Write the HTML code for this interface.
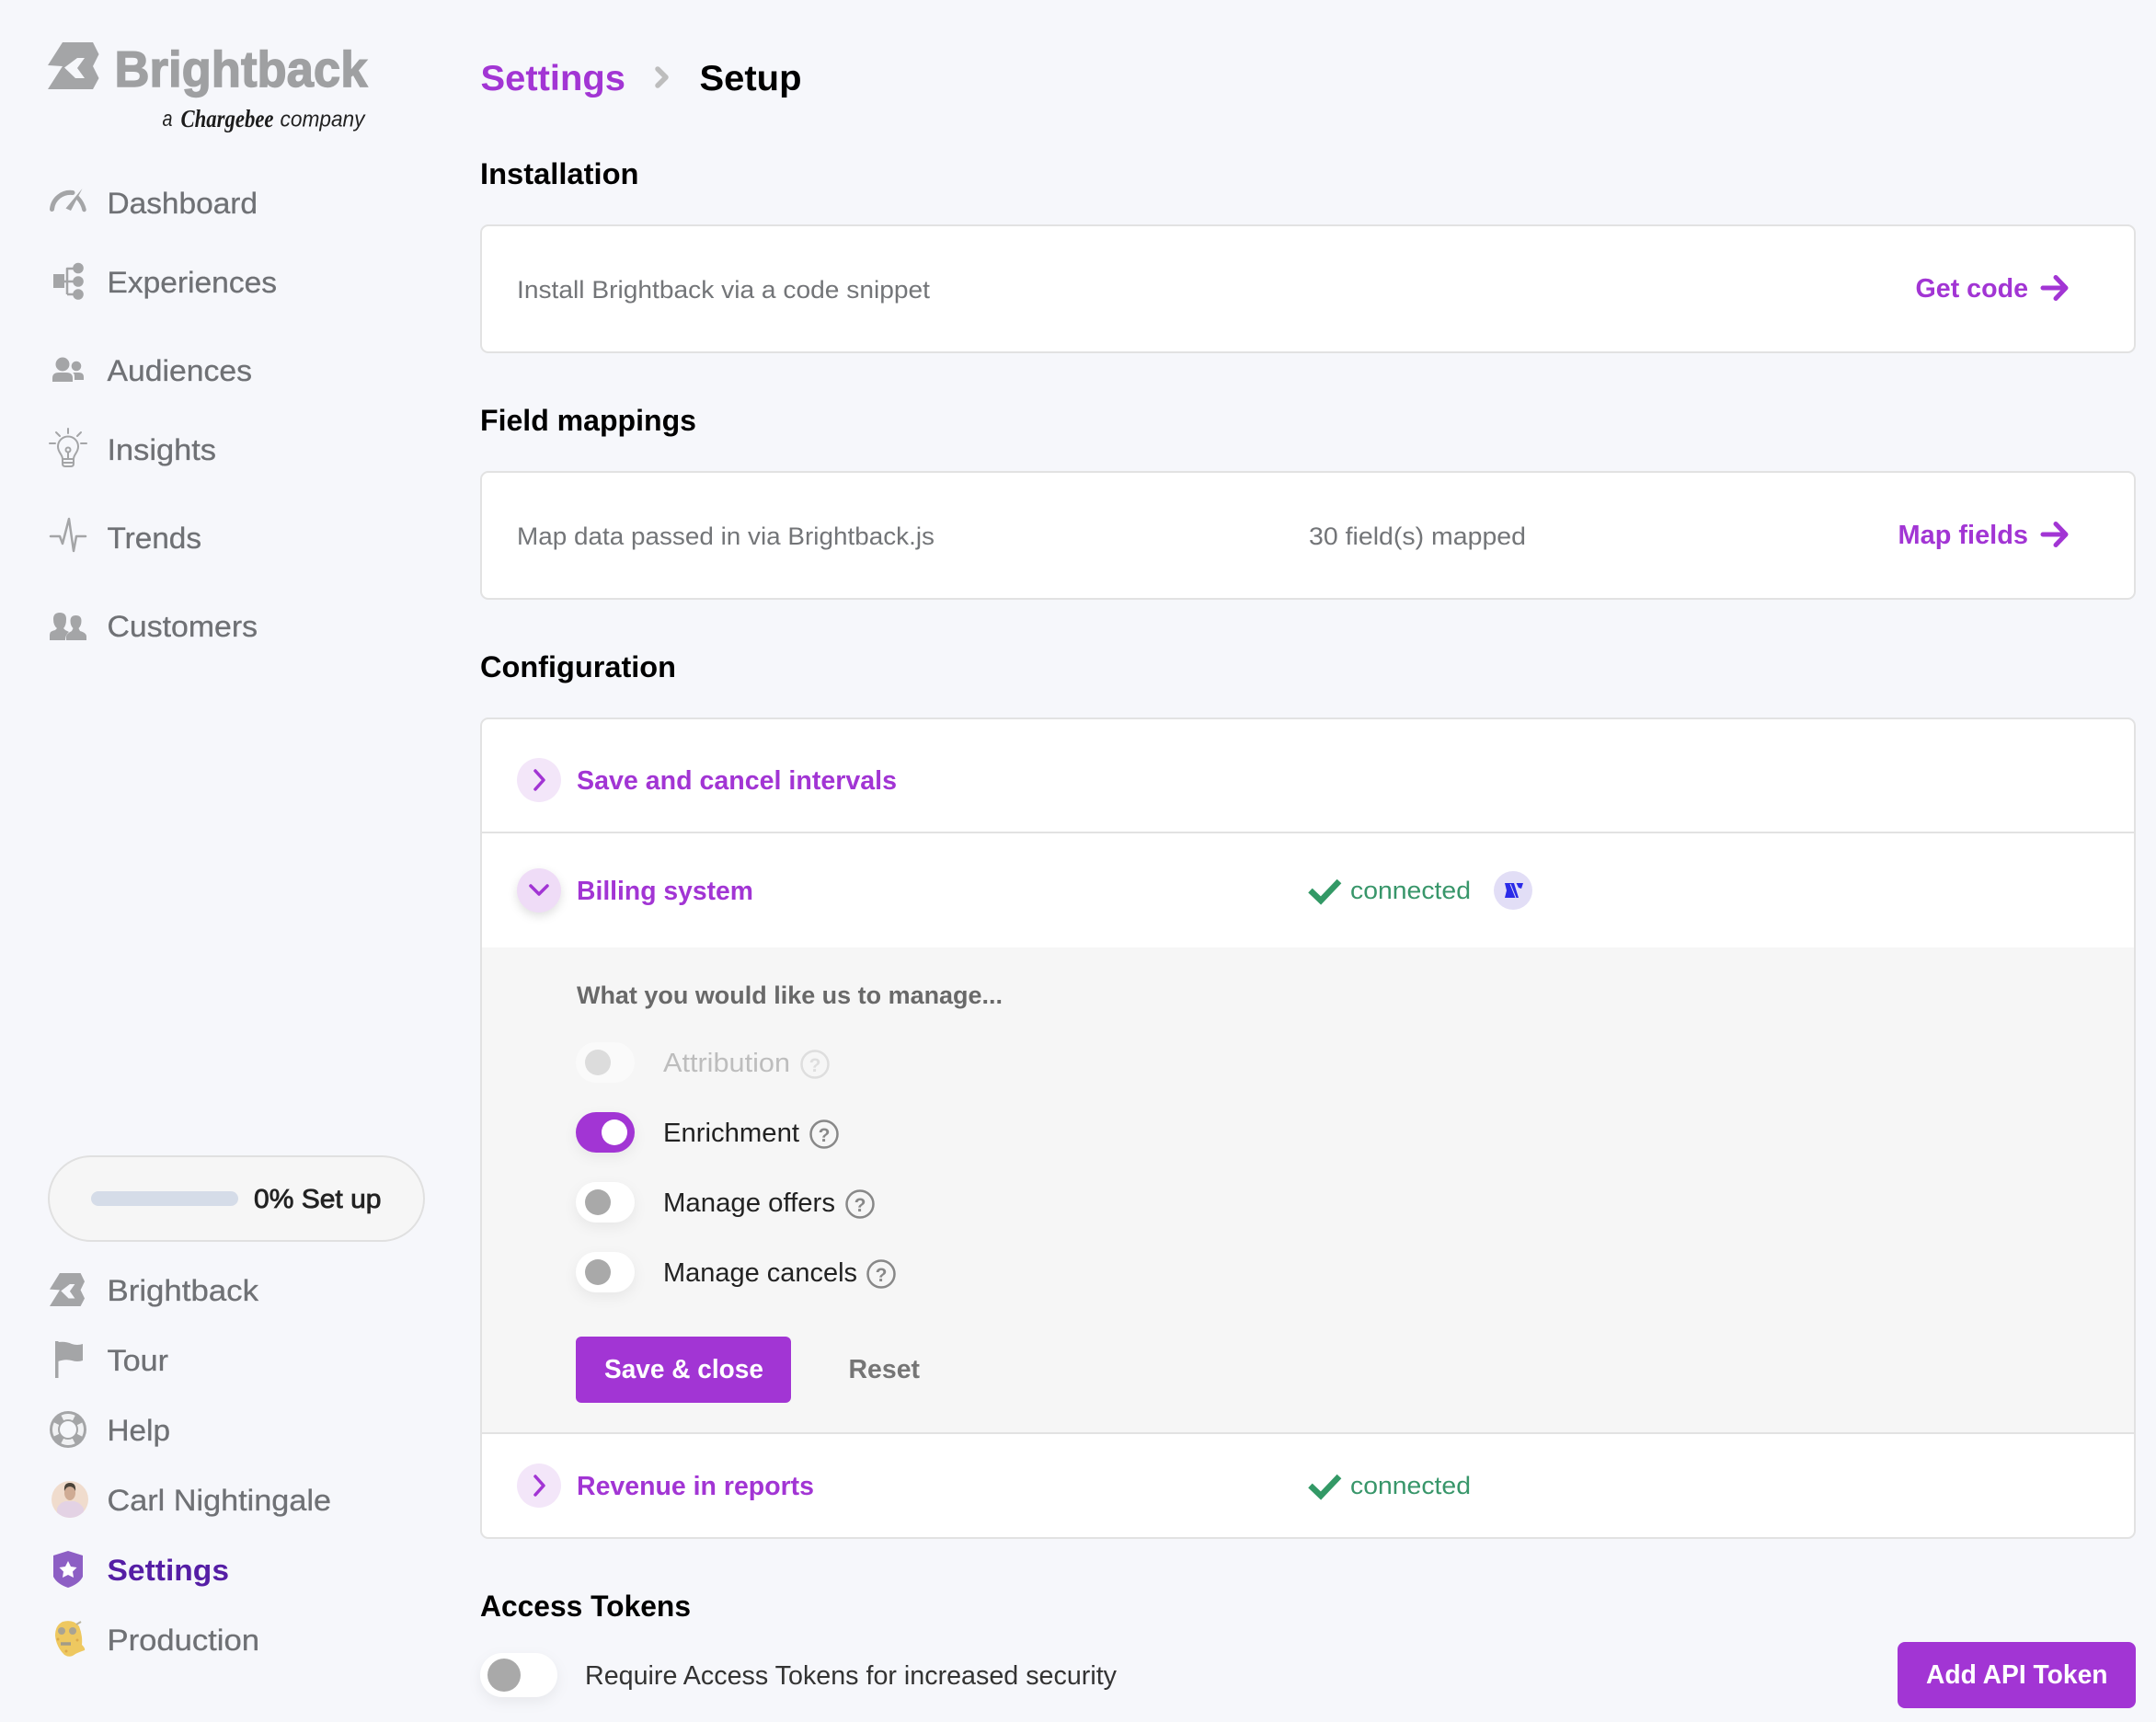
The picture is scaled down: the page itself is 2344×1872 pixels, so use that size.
<!DOCTYPE html>
<html lang="en"><head><meta charset="utf-8"><title>Settings - Setup</title>
<style>
html,body{margin:0;padding:0;background:#f6f7fb;width:2344px;height:1872px;overflow:hidden}
svg{display:block;position:absolute;left:0;top:0}
text{font-family:"Liberation Sans",sans-serif;white-space:pre}
.nav{font-size:32px;fill:#6f7175;stroke:#6f7175;stroke-width:.3px}
.h{font-size:32px;font-weight:700;fill:#000}
.body{font-size:27px;fill:#737578}
.link{font-size:29px;font-weight:700;fill:#a235d4}
.lab{font-size:28.5px;fill:#222}
.conn{font-size:27px;fill:#38966a}
.ic{fill:#a4a5a7}
.ln{fill:none;stroke:#a4a5a7;stroke-linecap:round;stroke-linejoin:round}
.pu{fill:none;stroke:#a235d4;stroke-linecap:round;stroke-linejoin:round}
.tog{filter:drop-shadow(0 5px 7px rgba(0,0,0,.06))}
.card{fill:#fff;stroke:#e2e2e2;stroke-width:2}
</style></head><body>
<svg width="2344" height="1872" viewBox="0 0 2344 1872" xmlns="http://www.w3.org/2000/svg">
<rect x="0" y="0" width="2344" height="1872" fill="#f6f7fb"/>

<!-- logo -->
<path class="ic" d="M68 46H101L107.500 59 101 72 107.500 85 101 97H52L68 72 52 71Z"/>
<path fill="#f6f7fb" d="M70 73.500 84 63H92L84 74 92 85H82Z"/>
<text x="124.500" y="94" font-size="55" font-weight="700" fill="#9fa0a2" stroke="#9fa0a2" stroke-width="1.400" textLength="275" lengthAdjust="spacingAndGlyphs">Brightback</text>
<text x="176.500" y="137" font-size="24" font-style="italic" fill="#222" textLength="11" lengthAdjust="spacingAndGlyphs">a</text>
<text x="196.500" y="138" font-size="27" font-style="italic" font-weight="700" fill="#1c1c1c" style="font-family:'Liberation Serif',serif" textLength="101" lengthAdjust="spacingAndGlyphs">Chargebee</text>
<text x="304.500" y="137.500" font-size="24" font-style="italic" fill="#222" textLength="92" lengthAdjust="spacingAndGlyphs">company</text>

<!-- top nav icons -->
<path class="ln" stroke-width="5" d="M56.500 227.500A20 20 0 0 1 79 209.500"/>
<path class="ic" d="M89.500 205 77 229 71.500 226.500Z"/>
<path class="ln" stroke-width="4.500" d="M84.500 215Q90 221 91.500 228"/>
<text class="nav" x="116.500" y="232" textLength="163.500" lengthAdjust="spacingAndGlyphs">Dashboard</text>

<rect class="ic" x="58" y="298" width="12" height="15"/>
<path class="ln" stroke-width="2.500" style="stroke-linecap:butt" d="M70 306H85M73 320V292H85M73 320H85"/>
<circle class="ic" cx="85" cy="291.500" r="5.800"/><circle class="ic" cx="85" cy="306" r="5.800"/><circle class="ic" cx="85" cy="320" r="5.800"/>
<text class="nav" x="116.500" y="318" textLength="184.500" lengthAdjust="spacingAndGlyphs">Experiences</text>

<circle class="ic" cx="68" cy="396" r="7.500"/><circle class="ic" cx="83" cy="398" r="5.300"/>
<path class="ic" d="M57 415V411Q57 405 64 405H72Q79 405 79 411V415Z"/>
<path class="ic" d="M81 413V409Q81 406 79 405H86Q91 405 91 410V413Z"/>
<text class="nav" x="116.500" y="414" textLength="157.500" lengthAdjust="spacingAndGlyphs">Audiences</text>

<g class="ln" stroke-width="2">
<path d="M74 466V471M61 470 65 474M88 470 84 474M54 482H60M88 482H94"/>
<path d="M68 499C68 494 63 492 63 485.500A11 11 0 0 1 85 485.500C85 492 80 494 80 499ZM68 499V504Q68 507 71 507H77Q80 507 80 504V499M68 503H80M74 491.500V499"/>
<circle cx="74" cy="489" r="2.500"/>
</g>
<text class="nav" x="116.500" y="500" textLength="118.500" lengthAdjust="spacingAndGlyphs">Insights</text>

<path class="ln" stroke-width="2.500" d="M55 583H65L68 591 75 564 80 599 83 583H93"/>
<text class="nav" x="116.500" y="596" textLength="102.500" lengthAdjust="spacingAndGlyphs">Trends</text>

<path class="ic" d="M54 696V690Q54 686 60 685L62 683Q58 680 58 673Q58 666 65 666Q72 666 72 673Q72 680 69 683L71 685Q73 686 75 687Q71 690 71 696Z"/>
<path class="ic" d="M72 696V692Q72 689 78 686L79.500 683Q76.500 680 76.500 675Q76.500 669 82.500 669Q88.500 669 88.500 675Q88.500 680 85.500 683L87 686Q94 688 94 692V696Z"/>
<text class="nav" x="116.500" y="692" textLength="163.500" lengthAdjust="spacingAndGlyphs">Customers</text>

<!-- setup pill -->
<rect x="53" y="1257" width="408" height="92" rx="46" fill="#f6f6f6" stroke="#e0e0e0" stroke-width="2"/>
<rect x="99" y="1295" width="160" height="16" rx="8" fill="#d5dce8"/>
<text x="276" y="1313" font-size="29" fill="#222" stroke="#222" stroke-width=".8" textLength="138.500" lengthAdjust="spacingAndGlyphs">0% Set up</text>

<!-- bottom nav -->
<g transform="translate(54 1384) scale(.685 .706) translate(-52 -46)">
<path class="ic" d="M68 46H101L107.500 59 101 72 107.500 85 101 97H52L68 72 52 71Z"/>
<path fill="#f6f7fb" d="M70 73.500 84 63H92L84 74 92 85H82Z"/>
</g>
<text class="nav" x="116.500" y="1414" textLength="164.500" lengthAdjust="spacingAndGlyphs">Brightback</text>

<rect class="ic" x="60" y="1458" width="3.500" height="40"/>
<path class="ic" d="M63 1459Q72 1458 78 1461Q84 1463 90 1461V1479Q84 1481 78 1479Q71 1477 63 1480Z"/>
<text class="nav" x="116.500" y="1490" textLength="66.500" lengthAdjust="spacingAndGlyphs">Tour</text>

<circle class="ic" cx="74" cy="1554" r="20"/>
<circle cx="74" cy="1554" r="14" fill="none" stroke="#f0f1f3" stroke-width="6" stroke-dasharray="13 8.990" stroke-dashoffset="6.500"/>
<circle cx="74" cy="1554" r="9" fill="#f6f7fb"/>
<text class="nav" x="116.500" y="1566" textLength="68.500" lengthAdjust="spacingAndGlyphs">Help</text>

<clipPath id="av"><circle cx="76" cy="1630" r="20"/></clipPath>
<g clip-path="url(#av)">
<rect x="56" y="1610" width="40" height="40" fill="#f0dccd"/>
<path d="M62 1650V1640Q64 1634 71 1632H81Q88 1634 91 1640V1650Z" fill="#e3d2e4"/>
<ellipse cx="76" cy="1623" rx="6" ry="8" fill="#cfab94"/>
<path d="M70 1621Q69 1612 76 1612Q83 1612 82 1621Q80 1616 76 1616Q72 1616 70 1621Z" fill="#4a4238"/>
</g>
<text class="nav" x="116.500" y="1642" textLength="243.500" lengthAdjust="spacingAndGlyphs">Carl Nightingale</text>

<path fill="#8d5fc4" d="M74 1686 90 1691V1714Q86 1722 74 1726Q62 1722 58 1714V1691Z"/>
<path fill="#fff" d="M74 1697 77 1703 83.500 1704 79 1708.500 80 1715 74 1712 68 1715 69 1708.500 64.500 1704 71 1703Z"/>
<text x="116.500" y="1718" font-size="32" font-weight="700" fill="#551ea5" textLength="132.500" lengthAdjust="spacingAndGlyphs">Settings</text>

<path fill="#eec860" d="M68 1763Q80 1760 86 1768Q90 1778 89 1788Q93 1792 92 1794Q86 1796 82 1798Q76 1803 70 1799Q61 1790 60 1778Q60 1767 68 1763Z"/>
<circle cx="67" cy="1773" r="4" fill="#a9a393"/><circle cx="79" cy="1773" r="4" fill="#a9a393"/>
<path d="M66 1787H77" stroke="#a39c87" stroke-width="3.500"/>
<path d="M83 1766 88 1763" stroke="#b9b39f" stroke-width="2"/>
<circle cx="84" cy="1783" r="1.500" fill="#dca94a"/><circle cx="72" cy="1795" r="1.500" fill="#dca94a"/><circle cx="63" cy="1782" r="1.500" fill="#dca94a"/>
<text class="nav" x="116.500" y="1794" textLength="165.500" lengthAdjust="spacingAndGlyphs">Production</text>

<!-- breadcrumb -->
<text x="522.500" y="98" font-size="39" font-weight="700" fill="#a235d4" textLength="157.500" lengthAdjust="spacingAndGlyphs">Settings</text>
<path d="M715 75 724 84 715 93" fill="none" stroke="#bdbdbd" stroke-width="5.500" stroke-linecap="round" stroke-linejoin="round"/>
<text x="760.500" y="98" font-size="39" font-weight="700" fill="#000" textLength="111" lengthAdjust="spacingAndGlyphs">Setup</text>

<!-- installation -->
<text class="h" x="522" y="200" textLength="172.500" lengthAdjust="spacingAndGlyphs">Installation</text>
<rect class="card" x="523" y="245" width="1798" height="138" rx="8"/>
<text class="body" x="562" y="324" textLength="449" lengthAdjust="spacingAndGlyphs">Install Brightback via a code snippet</text>
<text class="link" x="2082.500" y="323" textLength="122.500" lengthAdjust="spacingAndGlyphs">Get code</text>
<path class="pu" stroke-width="5" d="M2221 313H2245M2235 301.500 2246 313 2235 324.500"/>

<!-- field mappings -->
<text class="h" x="522" y="468" textLength="235" lengthAdjust="spacingAndGlyphs">Field mappings</text>
<rect class="card" x="523" y="513" width="1798" height="138" rx="8"/>
<text class="body" x="562" y="592" textLength="454" lengthAdjust="spacingAndGlyphs">Map data passed in via Brightback.js</text>
<text class="body" x="1423" y="592" textLength="236" lengthAdjust="spacingAndGlyphs">30 field(s) mapped</text>
<text class="link" x="2063.500" y="591" textLength="141.500" lengthAdjust="spacingAndGlyphs">Map fields</text>
<path class="pu" stroke-width="5" d="M2221 581H2245M2235 569.500 2246 581 2235 592.500"/>

<!-- configuration -->
<text class="h" x="522" y="736" textLength="213" lengthAdjust="spacingAndGlyphs">Configuration</text>
<rect class="card" x="523" y="781" width="1798" height="891" rx="8"/>
<rect x="524" y="1030" width="1796" height="528" fill="#f6f6f6"/>
<rect x="524" y="904" width="1796" height="2" fill="#e2e2e2"/>
<rect x="524" y="1557" width="1796" height="2" fill="#e2e2e2"/>

<circle cx="586" cy="848" r="24" fill="#f3e6f9"/>
<path class="pu" stroke-width="3.500" d="M582 838 591 848 582 858"/>
<text class="link" x="627" y="858" textLength="348" lengthAdjust="spacingAndGlyphs">Save and cancel intervals</text>

<circle cx="586" cy="968" r="24" fill="#efdcf7" style="filter:drop-shadow(0 4px 5px rgba(0,0,0,.12))"/>
<path class="pu" stroke-width="3.500" d="M577 963 586 972 595 963"/>
<text class="link" x="627" y="978" textLength="192" lengthAdjust="spacingAndGlyphs">Billing system</text>

<path d="M1424.500 968 1436 979 1456 958" fill="none" stroke="#339966" stroke-width="6.500"/>
<text class="conn" x="1468" y="977" textLength="131" lengthAdjust="spacingAndGlyphs">connected</text>
<circle cx="1645" cy="968" r="21" fill="#e2def6"/>
<path fill="#2b2be8" d="M1636 960H1646L1651 976H1636L1638 968ZM1648.500 960H1656L1654 966 1651 965Z"/>
<path d="M1642 961 1648 976" stroke="#e2def6" stroke-width="1"/>

<text x="627" y="1091" font-size="27" font-weight="700" fill="#696969" textLength="463" lengthAdjust="spacingAndGlyphs">What you would like us to manage...</text>

<!-- toggles -->
<rect x="626" y="1133" width="64" height="44" rx="22" fill="#fafafa"/>
<circle cx="650" cy="1155" r="14" fill="#dcdcdc"/>
<text class="lab" x="721" y="1165" style="fill:#bdbdbd" textLength="138" lengthAdjust="spacingAndGlyphs">Attribution</text>
<circle cx="886" cy="1157" r="14.500" fill="none" stroke="#dedede" stroke-width="2.500"/>
<text x="886" y="1165" font-size="21" font-weight="700" fill="#dedede" text-anchor="middle">?</text>

<rect class="tog" x="626" y="1209" width="64" height="44" rx="22" fill="#a235d4"/>
<circle cx="668" cy="1231" r="14" fill="#fff"/>
<text class="lab" x="721" y="1241" textLength="148" lengthAdjust="spacingAndGlyphs">Enrichment</text>
<circle cx="896" cy="1233" r="14.500" fill="none" stroke="#888" stroke-width="2.500"/>
<text x="896" y="1241" font-size="21" font-weight="700" fill="#888" text-anchor="middle">?</text>

<rect class="tog" x="626" y="1285" width="64" height="44" rx="22" fill="#fff"/>
<circle cx="650" cy="1307" r="14" fill="#a9a9a9"/>
<text class="lab" x="721" y="1317" textLength="187" lengthAdjust="spacingAndGlyphs">Manage offers</text>
<circle cx="935" cy="1309" r="14.500" fill="none" stroke="#888" stroke-width="2.500"/>
<text x="935" y="1317" font-size="21" font-weight="700" fill="#888" text-anchor="middle">?</text>

<rect class="tog" x="626" y="1361" width="64" height="44" rx="22" fill="#fff"/>
<circle cx="650" cy="1383" r="14" fill="#a9a9a9"/>
<text class="lab" x="721" y="1393" textLength="211" lengthAdjust="spacingAndGlyphs">Manage cancels</text>
<circle cx="958" cy="1385" r="14.500" fill="none" stroke="#888" stroke-width="2.500"/>
<text x="958" y="1393" font-size="21" font-weight="700" fill="#888" text-anchor="middle">?</text>

<!-- buttons -->
<rect x="626" y="1453" width="234" height="72" rx="6" fill="#a235d4"/>
<text x="657" y="1498" font-size="29" font-weight="700" fill="#fff" textLength="173" lengthAdjust="spacingAndGlyphs">Save &amp; close</text>
<text x="922.500" y="1498" font-size="29" font-weight="700" fill="#757575" textLength="77.500" lengthAdjust="spacingAndGlyphs">Reset</text>

<!-- revenue -->
<circle cx="586" cy="1615" r="24" fill="#f3e6f9"/>
<path class="pu" stroke-width="3.500" d="M582 1605 591 1615 582 1625"/>
<text class="link" x="627" y="1625" textLength="258" lengthAdjust="spacingAndGlyphs">Revenue in reports</text>
<path d="M1424.500 1615 1436 1626 1456 1605" fill="none" stroke="#339966" stroke-width="6.500"/>
<text class="conn" x="1468" y="1624" textLength="131" lengthAdjust="spacingAndGlyphs">connected</text>

<!-- access tokens -->
<text class="h" x="522" y="1757" textLength="229" lengthAdjust="spacingAndGlyphs">Access Tokens</text>
<rect class="tog" x="522" y="1797" width="84" height="48" rx="24" fill="#fff"/>
<circle cx="548" cy="1821" r="18" fill="#a9a9a9"/>
<text x="636" y="1831" font-size="28.500" fill="#333" textLength="578" lengthAdjust="spacingAndGlyphs">Require Access Tokens for increased security</text>
<rect x="2063" y="1785" width="259" height="72" rx="8" fill="#a235d4"/>
<text x="2094" y="1830" font-size="29" font-weight="700" fill="#fff" textLength="197.500" lengthAdjust="spacingAndGlyphs">Add API Token</text>
</svg>
</body></html>
